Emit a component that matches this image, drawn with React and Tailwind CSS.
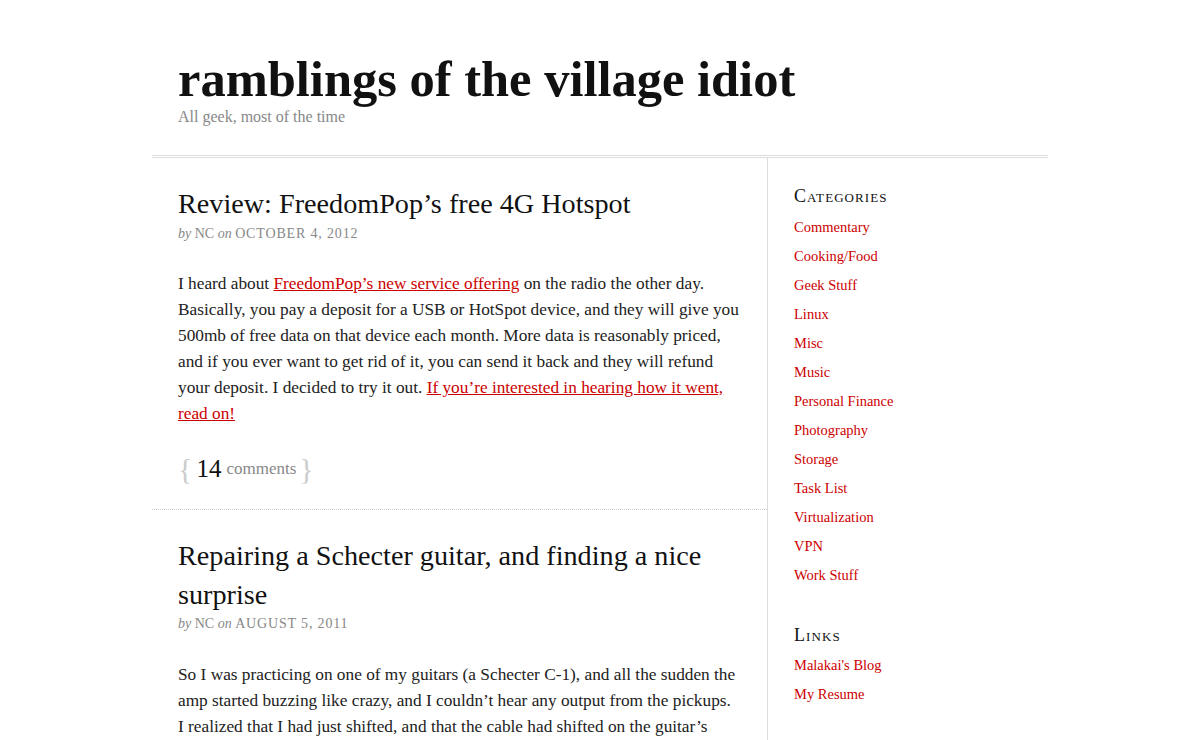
import React from 'react'

const categories = [
  'Commentary',
  'Cooking/Food',
  'Geek Stuff',
  'Linux',
  'Misc',
  'Music',
  'Personal Finance',
  'Photography',
  'Storage',
  'Task List',
  'Virtualization',
  'VPN',
  'Work Stuff',
]

const links = ["Malakai's Blog", 'My Resume']

const Meta = ({ date }) => (
  <div className="text-[14px] leading-[20px] text-[#888]">
    <i>by</i> NC <i>on</i> <span className="tracking-[0.06em]">{date}</span>
  </div>
)

const SideHeading = ({ children }) => (
  <h3 className="text-[18px] leading-[24px] text-[#111] tracking-[0.06em] [font-variant:small-caps]">
    {children}
  </h3>
)

export default function App() {
  return (
    <div className="min-h-screen bg-white font-['Liberation_Serif',Georgia,serif] text-[#222]">
      <div className="w-[896px] mx-auto">
        {/* header */}
        <div className="px-[26px] pt-[52px] pb-[27px]">
          <h1 className="text-[50.5px] leading-[54px] font-bold text-[#111]">
            ramblings of the village idiot
          </h1>
          <p className="text-[16px] leading-[22px] text-[#888]">All geek, most of the time</p>
        </div>
        <div className="h-[3px] border-y border-[#ddd]" />

        <div className="flex">
          {/* posts */}
          <div className="w-[616px] border-r border-[#ddd]">
            <div className="px-[26px] pt-[26px] pb-[25px] border-b border-dotted border-[#ccc]">
              <h2 className="text-[28.2px] leading-[40px] text-[#111]">
                Review: FreedomPop’s free 4G Hotspot
              </h2>
              <Meta date="OCTOBER 4, 2012" />
              <p className="mt-[27px] pr-[2px] text-[17.3px] leading-[26px] text-[#222]">
                I heard about{' '}
                <a href="#" className="text-[#c00] underline">FreedomPop’s new service offering</a>{' '}
                on the radio the other day. Basically, you pay a deposit for a USB or HotSpot device, and
                they will give you 500mb of free data on that device each month. More data is reasonably
                priced, and if you ever want to get rid of it, you can send it back and they will refund
                your deposit. I decided to try it out.{' '}
                <a href="#" className="text-[#c00] underline">
                  If you’re interested in hearing how it went, read on!
                </a>
              </p>
              <div className="mt-[27px] flex items-center leading-[30px]">
                <span className="text-[30px] text-[#ccc] font-light">{'{'}</span>
                <span className="text-[25px] text-[#111] ml-[4px]">14</span>
                <span className="text-[17px] text-[#888] ml-[5px]">comments</span>
                <span className="text-[30px] text-[#ccc] font-light ml-[3px]">{'}'}</span>
              </div>
            </div>

            <div className="px-[26px] pt-[26px]">
              <h2 className="text-[28.2px] leading-[39px] text-[#111]">
                Repairing a Schecter guitar, and finding a nice surprise
              </h2>
              <Meta date="AUGUST 5, 2011" />
              <p className="mt-[28px] pr-[2px] text-[17.3px] leading-[26px] text-[#222]">
                So I was practicing on one of my guitars (a Schecter C-1), and all the sudden the amp
                started buzzing like crazy, and I couldn’t hear any output from the pickups. I realized
                that I had just shifted, and that the cable had shifted on the guitar’s input jack, and
                that the connection was loose.
              </p>
            </div>
          </div>

          {/* sidebar */}
          <div className="flex-1 pl-[26px] pt-[26px]">
            <SideHeading>Categories</SideHeading>
            <ul className="mt-[5px]">
              {categories.map((c) => (
                <li key={c} className="text-[14.5px] leading-[29px]">
                  <a href="#" className="text-[#c00]">{c}</a>
                </li>
              ))}
            </ul>
            <div className="mt-[33px]">
              <SideHeading>Links</SideHeading>
              <ul className="mt-[4px]">
                {links.map((c) => (
                  <li key={c} className="text-[14.5px] leading-[29px]">
                    <a href="#" className="text-[#c00]">{c}</a>
                  </li>
                ))}
              </ul>
            </div>
          </div>
        </div>
      </div>
    </div>
  )
}
